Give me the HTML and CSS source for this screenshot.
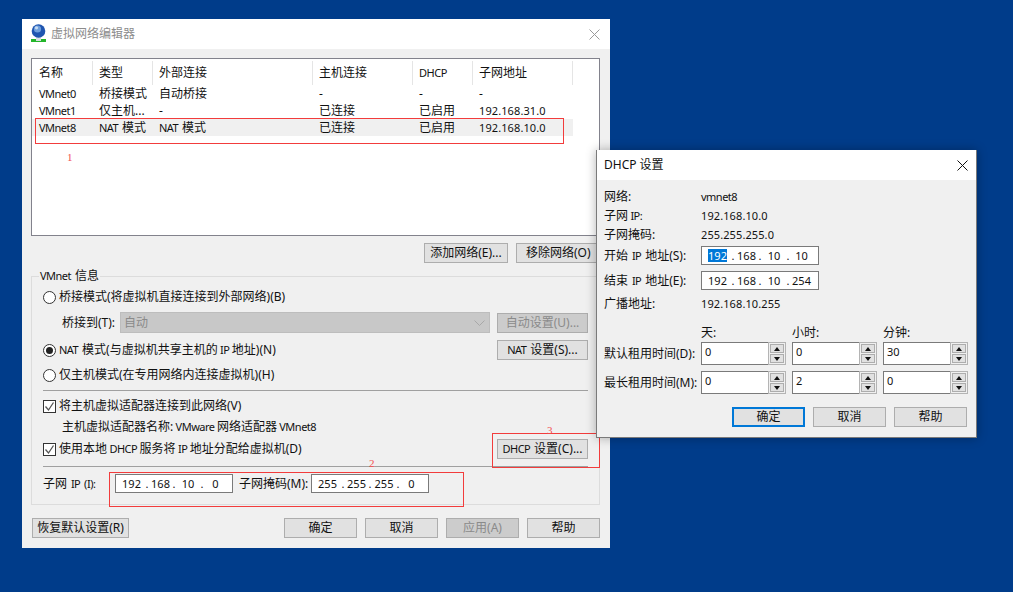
FILE: index.html
```html
<!DOCTYPE html>
<html lang="zh-CN">
<head>
    <meta charset="UTF-8">
    <title>虚拟网络编辑器</title>
    <link rel="stylesheet" href="styles.css">
</head>
<body>
    <div class="desktop">
        <div class="window main-window">
            <div class="titlebar">
                <svg class="app-icon" width="17" height="18" viewBox="0 0 17 18">
                    <rect x="0" y="15" width="15" height="3" fill="#23b52a"/>
                    <rect x="5" y="13" width="5" height="4" fill="#d8dde0"/>
                    <circle cx="7.5" cy="7" r="6.8" fill="#1f55b0"/>
                    <circle cx="6.5" cy="5" r="3.6" fill="#6f9fdc"/>
                    <circle cx="5.5" cy="3.8" r="1.6" fill="#c7dcf3"/>
                </svg>
                <span class="title-text muted">虚拟网络编辑器</span>
                <svg class="close-icon" width="11" height="11" viewBox="0 0 11 11">
                    <path d="M.5.5l10 10M10.5.5l-10 10" stroke="#9a9a9a" fill="none"/>
                </svg>
            </div>
            <div class="client">
                <div class="net-list">
                    <div class="net-row net-head">
                        <span>名称</span><span>类型</span><span>外部连接</span><span>主机连接</span><span class="en">DHCP</span><span>子网地址</span>
                    </div>
                    <div class="net-row">
                        <span class="en">VMnet0</span><span>桥接模式</span><span>自动桥接</span><span>-</span><span>-</span><span>-</span>
                    </div>
                    <div class="net-row">
                        <span class="en">VMnet1</span><span>仅主机...</span><span>-</span><span>已连接</span><span>已启用</span><span class="ip">192.168.31.0</span>
                    </div>
                    <div class="net-row net-selected">
                        <span class="en">VMnet8</span><span><i class="en sp">NAT </i>模式</span><span><i class="en sp">NAT </i>模式</span><span>已连接</span><span>已启用</span><span class="ip">192.168.10.0</span>
                    </div>
                </div>

                <div class="list-actions">
                    <button class="btn btn-add">添加网络(E)...</button>
                    <button class="btn btn-remove">移除网络(O)</button>
                </div>

                <fieldset class="group">
                    <legend><i class="en sp">VMnet </i>信息</legend>
                    <div class="opt-row row-bridge">
                        <span class="radio"></span><span>桥接模式(将虚拟机直接连接到外部网络)(B)</span>
                    </div>
                    <div class="opt-row row-select">
                        <span class="indent-label">桥接到(T):</span>
                        <div class="select-box">
                            <span>自动</span>
                            <svg width="11" height="6" viewBox="0 0 11 6"><path d="M.5.5l5 5 5-5" stroke="#a8a8a8" fill="none"/></svg>
                        </div>
                        <button class="btn btn-side btn-disabled">自动设置(U)...</button>
                    </div>
                    <div class="opt-row row-nat">
                        <span class="radio radio-on"></span><span><i class="en sp">NAT </i>模式(与虚拟机共享主机的<i class="en"> IP </i>地址)(N)</span>
                        <button class="btn btn-side"><i class="en sp">NAT </i>设置(S)...</button>
                    </div>
                    <div class="opt-row row-host">
                        <span class="radio"></span><span>仅主机模式(在专用网络内连接虚拟机)(H)</span>
                    </div>
                    <div class="rule rule-top"></div>
                    <div class="opt-row row-connect">
                        <span class="check"><svg width="11" height="11" viewBox="0 0 11 11"><path d="M1.5 5.5l3 3.5 5-7.5" stroke="#555" stroke-width="1.3" fill="none"/></svg></span>
                        <span>将主机虚拟适配器连接到此网络(V)</span>
                    </div>
                    <div class="opt-row row-adapter">
                        <span class="adapter-name">主机虚拟适配器名称:<i class="en"> VMware </i>网络适配器<i class="en"> VMnet8</i></span>
                    </div>
                    <div class="opt-row row-dhcp">
                        <span class="check"><svg width="11" height="11" viewBox="0 0 11 11"><path d="M1.5 5.5l3 3.5 5-7.5" stroke="#555" stroke-width="1.3" fill="none"/></svg></span>
                        <span>使用本地<i class="en"> DHCP </i>服务将<i class="en"> IP </i>地址分配给虚拟机(D)</span>
                        <button class="btn btn-side"><i class="en sp">DHCP </i>设置(C)...</button>
                    </div>
                    <div class="rule rule-bottom"></div>
                    <div class="opt-row row-subnet">
                        <span class="subnet-label">子网<i class="en sp"> IP (I):</i></span>
                        <div class="ip-field"><span>192</span><span>.</span><span>168</span><span>.</span><span>10</span><span>.</span><span>0</span></div>
                        <span class="mask-label">子网掩码(M):</span>
                        <div class="ip-field"><span>255</span><span>.</span><span>255</span><span>.</span><span>255</span><span>.</span><span>0</span></div>
                    </div>
                </fieldset>

                <div class="footer">
                    <button class="btn btn-restore">恢复默认设置(R)</button>
                    <div class="footer-right">
                        <button class="btn btn-foot">确定</button>
                        <button class="btn btn-foot">取消</button>
                        <button class="btn btn-foot btn-disabled">应用(A)</button>
                        <button class="btn btn-foot">帮助</button>
                    </div>
                </div>
            </div>
        </div>

        <div class="mark mark-1"></div>
        <div class="mark mark-2"></div>
        <div class="mark mark-3"></div>
        <span class="mark-num num-1">1</span>
        <span class="mark-num num-2">2</span>
        <span class="mark-num num-3">3</span>

        <div class="window dhcp-window">
            <div class="titlebar dhcp-title">
                <span class="title-text">DHCP 设置</span>
                <svg class="close-icon" width="11" height="11" viewBox="0 0 11 11">
                    <path d="M.5.5l10 10M10.5.5l-10 10" stroke="#111" fill="none"/>
                </svg>
            </div>
            <div class="client dhcp-client">
                <div class="info-row h19"><span class="info-label">网络:</span><span class="en">vmnet8</span></div>
                <div class="info-row h19"><span class="info-label">子网<i class="en"> IP:</i></span><span class="ip">192.168.10.0</span></div>
                <div class="info-row h19"><span class="info-label">子网掩码:</span><span class="ip">255.255.255.0</span></div>
                <div class="info-row h25 first-field">
                    <span class="info-label">开始<i class="en sp"> IP </i>地址(S):</span>
                    <div class="ip-field"><span><b class="sel">192</b></span><span>.</span><span>168</span><span>.</span><span>10</span><span>.</span><span>10</span></div>
                </div>
                <div class="info-row h25">
                    <span class="info-label">结束<i class="en sp"> IP </i>地址(E):</span>
                    <div class="ip-field"><span>192</span><span>.</span><span>168</span><span>.</span><span>10</span><span>.</span><span>254</span></div>
                </div>
                <div class="info-row h19 row-broadcast"><span class="info-label">广播地址:</span><span class="ip">192.168.10.255</span></div>

                <div class="lease-grid">
                    <span></span><span class="lease-head">天:</span><span class="lease-head">小时:</span><span class="lease-head">分钟:</span>
                    <span class="lease-label">默认租用时间(D):</span>
                    <div class="spin"><span class="spin-value">0</span><span class="spin-btns"><i class="up"></i><i class="down"></i></span></div>
                    <div class="spin"><span class="spin-value">0</span><span class="spin-btns"><i class="up"></i><i class="down"></i></span></div>
                    <div class="spin"><span class="spin-value">30</span><span class="spin-btns"><i class="up"></i><i class="down"></i></span></div>
                    <span class="lease-label">最长租用时间(M):</span>
                    <div class="spin"><span class="spin-value">0</span><span class="spin-btns"><i class="up"></i><i class="down"></i></span></div>
                    <div class="spin"><span class="spin-value">2</span><span class="spin-btns"><i class="up"></i><i class="down"></i></span></div>
                    <div class="spin"><span class="spin-value">0</span><span class="spin-btns"><i class="up"></i><i class="down"></i></span></div>
                </div>

                <div class="dhcp-footer">
                    <button class="btn btn-foot btn-default">确定</button>
                    <button class="btn btn-foot">取消</button>
                    <button class="btn btn-foot">帮助</button>
                </div>
            </div>
        </div>
    </div>
</body>
</html>
```

FILE: styles.css
```css
* {
    box-sizing: border-box;
}
body {
    margin: 0;
    background-color: #003c8a;
    font-family: "Noto Sans", "Noto Sans CJK SC", sans-serif;
    font-size: 12px;
    line-height: 16px;
    color: #111;
}
i {
    font-style: normal;
}
/* latin runs are narrower than the default font at this size */
.en {
    font-size: 11px;
    letter-spacing: -0.5px;
}
.sp {
    word-spacing: 1.5px;
}
.desktop {
    position: relative;
    width: 1013px;
    height: 592px;
    overflow: hidden;
}
.window {
    position: absolute;
    background: #f0f0f0;
    display: flex;
    flex-direction: column;
}
.main-window {
    left: 22px;
    top: 19px;
    width: 588px;
    height: 529px;
}
.dhcp-window {
    left: 596px;
    top: 150px;
    width: 381px;
    height: 288px;
    border: 1px solid #7a7a7a;
    border-top: 0;
    box-shadow: 0 0 10px rgba(0,0,0,0.3);
}
.titlebar {
    height: 30px;
    flex-shrink: 0;
    background: #fff;
    display: flex;
    align-items: center;
    padding: 0 10px 0 9px;
}
.app-icon {
    margin-right: 3px;
    margin-top: -2px;
}
.title-text {
    flex: 1;
}
.muted {
    color: #8c8c8c;
}
.client {
    flex: 1;
    padding: 9px 10px 0 9px;
    display: flex;
    flex-direction: column;
}

/* network list */
.net-list {
    height: 178px;
    flex-shrink: 0;
    background: #fff;
    border: 1px solid #82828c;
    padding-top: 1px;
}
.net-row {
    display: grid;
    grid-template-columns: 60px 60px 160px 100px 60px 100px;
    height: 17px;
    align-items: center;
    width: 541px;
    padding-left: 1px;
}
.net-row span {
    padding-left: 6px;
    white-space: nowrap;
}
.net-head {
    height: 25px;
}
.net-head span {
    height: 24px;
    line-height: 24px;
    border-right: 1px solid #e5e5e5;
}
.net-selected {
    background: #f0f0f0;
}
.ip {
    font-size: 11px;
    letter-spacing: 0.1px;
}

/* buttons */
.btn {
    height: 20px;
    padding: 0;
    background: #e1e1e1;
    border: 1px solid #adadad;
    font: inherit;
    color: #111;
    white-space: nowrap;
}
.btn-disabled {
    background: #ccc;
    color: #8a8a8a;
}
.list-actions {
    display: flex;
    justify-content: flex-end;
    gap: 8px;
    margin-top: 7px;
}
.btn-add {
    width: 84px;
}
.btn-remove {
    width: 84px;
    text-align: left;
    padding-left: 9px;
}
.btn-side {
    width: 91px;
    margin-left: auto;
}
.btn-foot {
    width: 73px;
}
.btn-restore {
    width: 97px;
}
.btn-default {
    border: 2px solid #0078d7;
}

/* vmnet group */
.group {
    margin: 5px 0 0;
    padding: 0 11px;
    height: 237px;
    border: 1px solid #dcdcdc;
    min-width: 0;
}
.group legend {
    padding: 0 1px;
    margin-left: -4px;
    height: 16px;
}
.opt-row {
    display: flex;
    align-items: center;
    white-space: nowrap;
}
.row-bridge {
    height: 20px;
    margin-top: 3px;
}
.row-select {
    height: 21px;
    margin-top: 5px;
}
.row-nat {
    height: 20px;
    margin-top: 7px;
}
.row-host {
    height: 20px;
    margin-top: 5px;
}
.row-connect {
    height: 20px;
    margin-top: 5px;
}
.row-adapter {
    height: 20px;
    margin-top: 1px;
}
.row-dhcp {
    height: 20px;
    margin-top: 2px;
}
.row-subnet {
    height: 19px;
    margin-top: 7px;
}
.rule {
    height: 1px;
    background: #a0a0a0;
}
.rule-top {
    margin-top: 5px;
}
.rule-bottom {
    margin-top: 7px;
}
.radio {
    width: 13px;
    height: 13px;
    border: 1px solid #333;
    border-radius: 50%;
    background: #fff;
    margin-right: 3px;
    display: flex;
    align-items: center;
    justify-content: center;
    flex-shrink: 0;
}
.radio-on::after {
    content: "";
    width: 7px;
    height: 7px;
    border-radius: 50%;
    background: #222;
}
.check {
    width: 13px;
    height: 13px;
    border: 1px solid #333;
    background: #fff;
    margin-right: 3px;
    flex-shrink: 0;
    display: flex;
    align-items: center;
    justify-content: center;
}
.indent-label {
    margin-left: 19px;
    width: 58px;
}
.select-box {
    width: 370px;
    height: 21px;
    background: #c8c8c8;
    border: 1px solid #bdbdbd;
    color: #8a8a8a;
    display: flex;
    align-items: center;
    justify-content: space-between;
    padding: 0 4px 0 3px;
}
.adapter-name {
    margin-left: 19px;
}
.subnet-label {
    width: 72px;
}
.mask-label {
    margin-left: 6px;
    width: 72px;
}
.ip-field {
    width: 118px;
    height: 19px;
    background: #fff;
    border: 1px solid #7a7a7a;
    display: grid;
    grid-template-columns: 27px 4px 23px 4px 24px 4px 23px;
    padding-left: 2px;
    align-items: center;
    text-align: center;
    font-size: 11px;
}
.sel {
    display: inline-block;
    line-height: 13px;
    background: #0078d7;
    color: #fff;
    font-weight: normal;
}

/* footer of the main window */
.footer {
    display: flex;
    justify-content: space-between;
    margin-top: 13px;
    padding-left: 1px;
}
.footer-right {
    display: flex;
    gap: 8px;
}

/* dhcp dialog */
.dhcp-title {
    height: 30px;
    padding: 0 8px 0 7px;
}
.dhcp-client {
    padding: 7px 9px 0 7px;
}
.info-row {
    display: flex;
    align-items: center;
}
.h19 {
    height: 19px;
}
.h25 {
    height: 25px;
}
.first-field {
    margin-top: -1px;
}
.row-broadcast {
    margin-top: 1px;
}
.info-label {
    width: 97px;
    white-space: nowrap;
}
.lease-grid {
    display: grid;
    grid-template-columns: 91px 85px 85px 85px;
    column-gap: 6px;
    grid-template-rows: 19px 23px 23px;
    row-gap: 6px;
    align-items: center;
    margin-top: 4px;
}
.lease-label {
    white-space: nowrap;
}
.lease-head {
    align-self: end;
    margin-bottom: -5px;
}
.spin {
    height: 23px;
    display: flex;
}
.spin-value {
    flex: 1;
    background: #fff;
    border: 1px solid #7a7a7a;
    border-right: 0;
    padding-left: 3px;
    line-height: 18px;
    font-size: 11px;
}
.spin-btns {
    width: 18px;
    display: flex;
    flex-direction: column;
    gap: 1px;
    background: #f0f0f0;
    border: 1px solid #b4b4b4;
    padding: 1px;
}
.spin-btns i {
    flex: 1;
    background: #e1e1e1;
    border: 1px solid #adadad;
    display: flex;
    align-items: center;
    justify-content: center;
}
.up::after {
    content: "";
    border: 3.5px solid transparent;
    border-top: 0;
    border-bottom: 4px solid #111;
}
.down::after {
    content: "";
    border: 3.5px solid transparent;
    border-bottom: 0;
    border-top: 4px solid #111;
}
.dhcp-footer {
    display: flex;
    justify-content: flex-end;
    gap: 8px;
    margin-top: 13px;
}

/* red annotations drawn over the screenshot */
.mark {
    position: absolute;
    border: 1px solid #f23c3c;
}
.mark-1 {
    left: 35px;
    top: 118px;
    width: 529px;
    height: 26px;
}
.mark-2 {
    left: 109px;
    top: 472px;
    width: 355px;
    height: 35px;
}
.mark-3 {
    left: 492px;
    top: 433px;
    width: 108px;
    height: 35px;
}
.mark-num {
    position: absolute;
    color: #f25050;
    font-family: "Liberation Serif", serif;
    font-size: 11px;
}
.num-1 {
    left: 67px;
    top: 149px;
}
.num-2 {
    left: 369px;
    top: 455px;
}
.num-3 {
    left: 547px;
    top: 422px;
}
```
